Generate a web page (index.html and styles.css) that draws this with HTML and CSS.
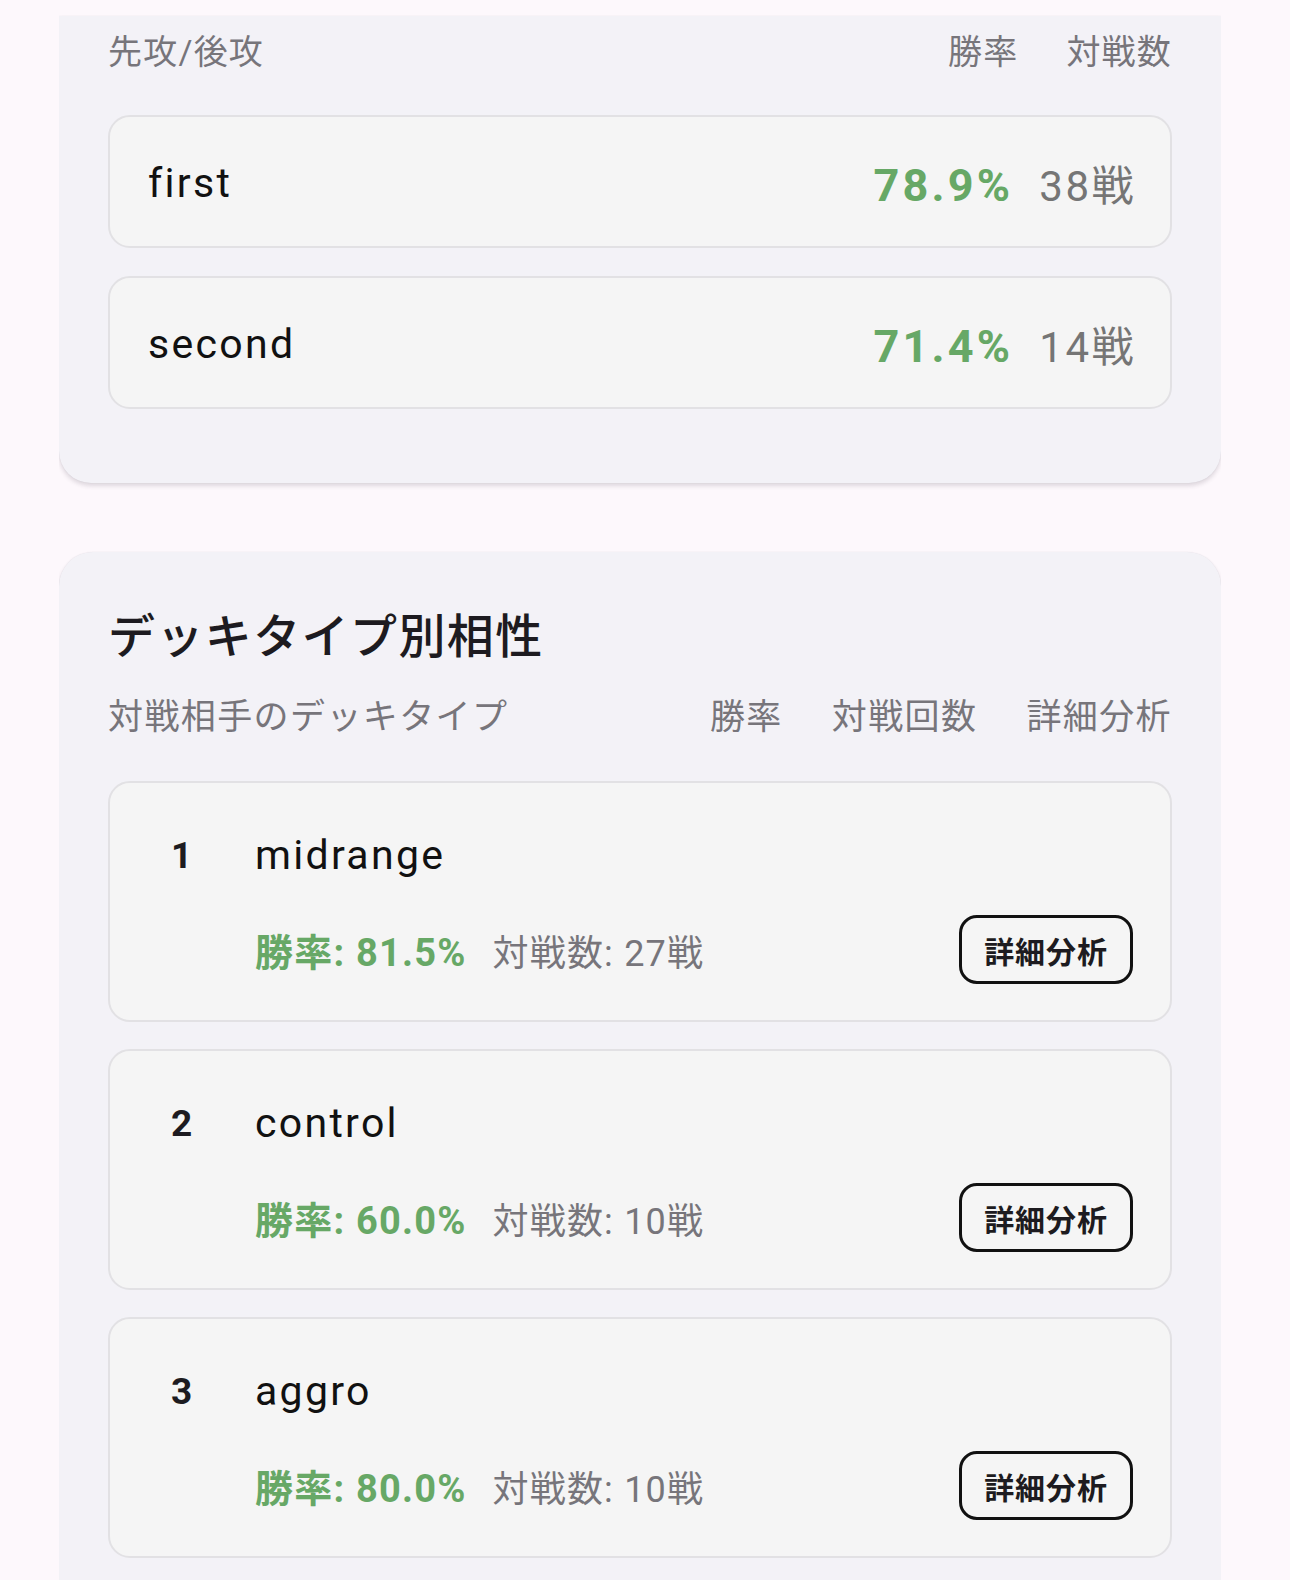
FILE: index.html
```html
<!DOCTYPE html>
<html lang="ja">
<head>
<meta charset="utf-8">
<title>戦績</title>
<link rel="stylesheet" href="styles.css">
</head>
<body>
<div class="page">
  <section class="card card-cut">
    <div class="thead">
      <span>先攻/後攻</span>
      <div class="thead-right">
        <span>勝率</span>
        <span>対戦数</span>
      </div>
    </div>
    <div class="row">
      <span class="row-name">first</span>
      <div class="row-stats">
        <span class="rate">78.9%</span>
        <span class="count">38戦</span>
      </div>
    </div>
    <div class="row">
      <span class="row-name">second</span>
      <div class="row-stats">
        <span class="rate">71.4%</span>
        <span class="count">14戦</span>
      </div>
    </div>
  </section>

  <section class="card card-deck">
    <h2 class="card-title">デッキタイプ別相性</h2>
    <div class="thead thead-deck">
      <span>対戦相手のデッキタイプ</span>
      <div class="thead-right">
        <span>勝率</span>
        <span>対戦回数</span>
        <span>詳細分析</span>
      </div>
    </div>

    <div class="item">
      <div class="item-top">
        <span class="rank">1</span>
        <span class="item-name">midrange</span>
      </div>
      <div class="item-bottom">
        <div class="item-stats">
          <span class="item-rate">勝率: 81.5%</span>
          <span class="item-count">対戦数: 27戦</span>
        </div>
        <button class="btn">詳細分析</button>
      </div>
    </div>

    <div class="item">
      <div class="item-top">
        <span class="rank">2</span>
        <span class="item-name">control</span>
      </div>
      <div class="item-bottom">
        <div class="item-stats">
          <span class="item-rate">勝率: 60.0%</span>
          <span class="item-count">対戦数: 10戦</span>
        </div>
        <button class="btn">詳細分析</button>
      </div>
    </div>

    <div class="item">
      <div class="item-top">
        <span class="rank">3</span>
        <span class="item-name">aggro</span>
      </div>
      <div class="item-bottom">
        <div class="item-stats">
          <span class="item-rate">勝率: 80.0%</span>
          <span class="item-count">対戦数: 10戦</span>
        </div>
        <button class="btn">詳細分析</button>
      </div>
    </div>
  </section>
</div>
</body>
</html>
```

FILE: styles.css
```css
html, body {
  margin: 0;
  padding: 0;
  background: #fdf8fc;
}

body {
  font-family: "Roboto", "Noto Sans CJK JP", sans-serif;
  color: #1d1b20;
  letter-spacing: 1.2px;
}

.page {
  width: 1162px;
  margin-left: 59px;
  padding-top: 16px;
  height: 1564px;
  overflow: hidden;
}

.card {
  background: #f3f2f7;
  box-sizing: border-box;
  padding: 0 49px;
  box-shadow: 0 3px 4px rgba(60, 50, 70, 0.16), 0 0 1px rgba(60, 50, 70, 0.12);
}

.card-cut {
  border-radius: 0 0 32px 32px;
  padding-top: 12px;
  padding-bottom: 74px;
}

.card-deck {
  margin-top: 69px;
  border-radius: 34px;
  padding-top: 53px;
  padding-bottom: 40px;
}

.thead {
  display: flex;
  justify-content: space-between;
  align-items: center;
  height: 48px;
  font-size: 34px;
  line-height: 48px;
  color: #77757b;
  margin-bottom: 39px;
}

.thead-right {
  display: flex;
  gap: 48px;
}

.thead-deck {
  font-size: 35px;
  letter-spacing: 1.4px;
}

.thead-deck .thead-right {
  gap: 49px;
}

.row {
  box-sizing: border-box;
  height: 133px;
  border: 2px solid #e2e1e4;
  border-radius: 22px;
  background: #f5f5f5;
  display: flex;
  align-items: center;
  justify-content: space-between;
  padding: 2px 34px 0 38px;
  margin-bottom: 28px;
}

.row:last-child {
  margin-bottom: 0;
}

.row-name {
  font-size: 41px;
  letter-spacing: 2.3px;
  color: #111;
}

.row-stats {
  display: flex;
  align-items: baseline;
  gap: 26px;
}

.rate {
  color: #67a866;
  font-weight: 700;
  font-size: 45px;
  letter-spacing: 3.2px;
}

.count {
  color: #757575;
  font-size: 42px;
  letter-spacing: 2.5px;
}

.card-title {
  margin: 0 0 25px;
  font-size: 47px;
  line-height: 64px;
  font-weight: 500;
  color: #1d1b20;
  letter-spacing: 1.4px;
}

.item {
  box-sizing: border-box;
  height: 241px;
  border: 2px solid #e2e1e4;
  border-radius: 22px;
  background: #f5f5f5;
  padding: 46px 37px 36px 61px;
  margin-bottom: 27px;
}

.item-top {
  display: flex;
  align-items: center;
  height: 52px;
}

.rank {
  width: 84px;
  font-size: 37px;
  font-weight: 700;
  color: #1d1b20;
}

.item-name {
  font-size: 41px;
  letter-spacing: 2.3px;
  color: #111;
}

.item-bottom {
  margin-top: 34px;
  padding-left: 84px;
  height: 69px;
  display: flex;
  align-items: center;
  justify-content: space-between;
}

.item-stats {
  display: flex;
  align-items: baseline;
  gap: 26px;
}

.item-rate {
  color: #67a866;
  font-weight: 700;
  font-size: 38px;
}

.item-count {
  color: #77757b;
  font-size: 36px;
}

.btn {
  box-sizing: border-box;
  width: 174px;
  height: 69px;
  border: 3px solid #111;
  border-radius: 18px;
  background: transparent;
  font-family: "Roboto", "Noto Sans CJK JP", sans-serif;
  font-size: 30px;
  font-weight: 700;
  letter-spacing: 0.9px;
  color: #1d1b20;
  padding: 0;
}
```
